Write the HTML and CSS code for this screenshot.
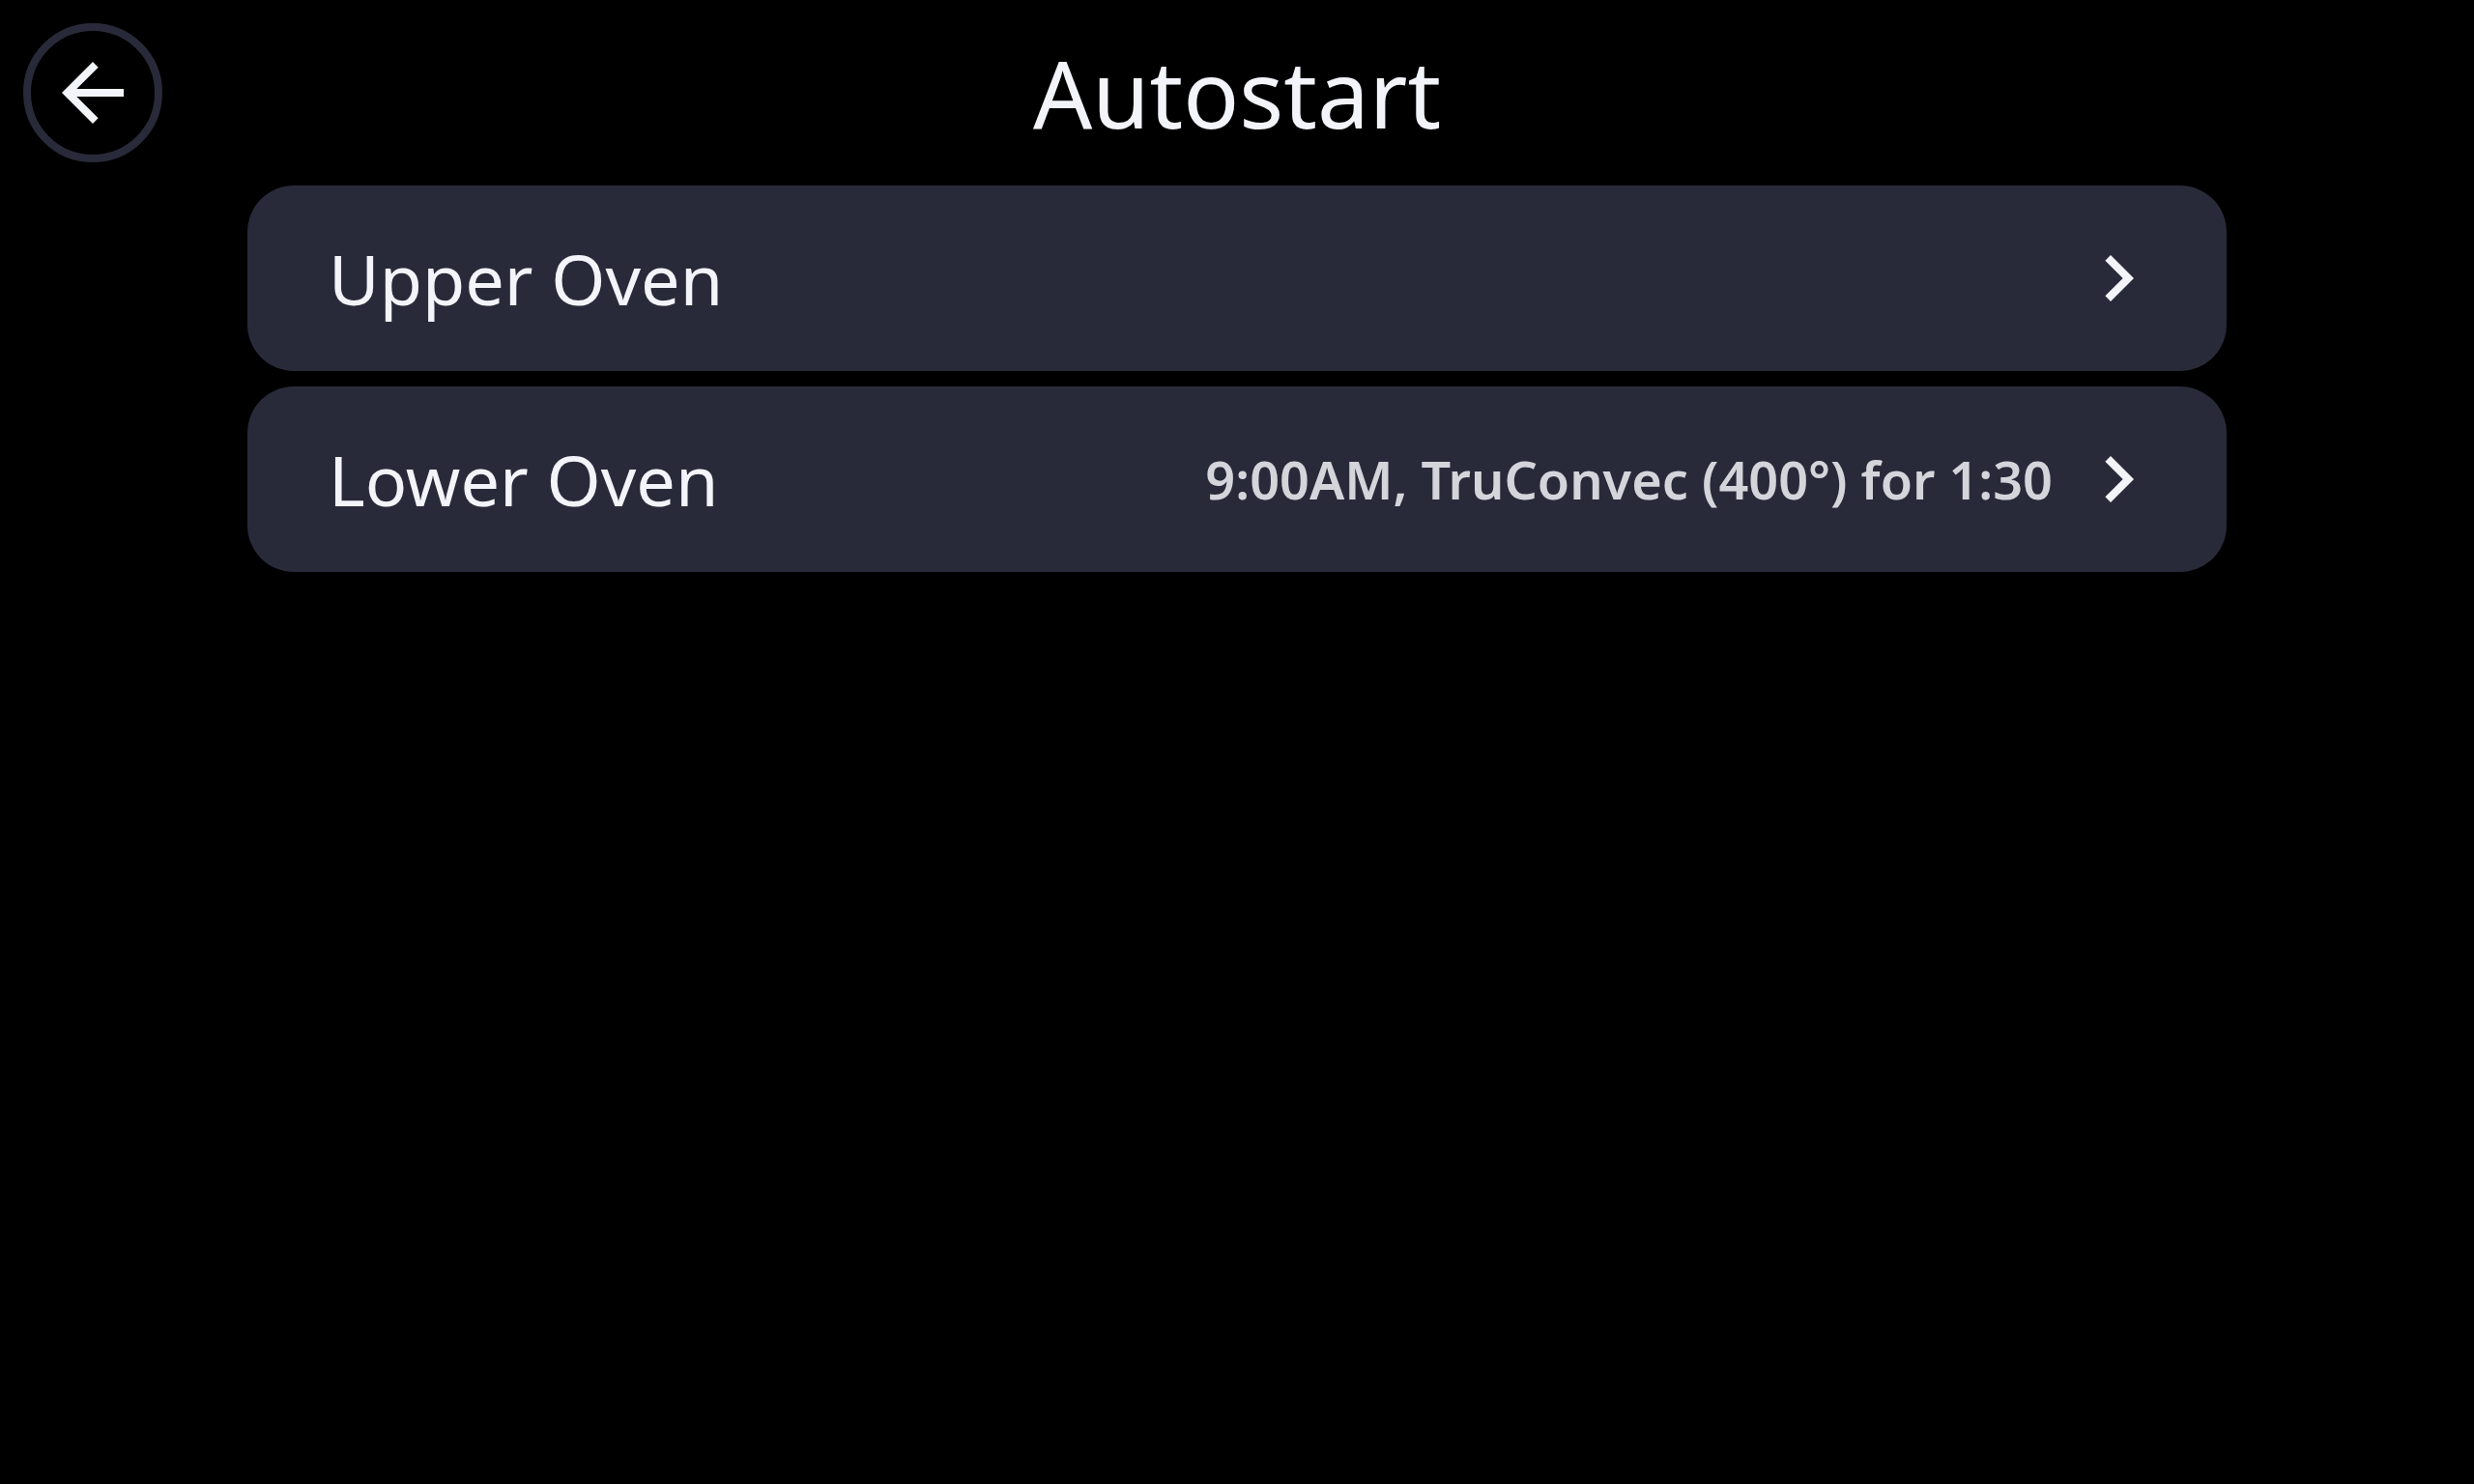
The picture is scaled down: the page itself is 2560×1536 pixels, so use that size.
FILE: index.html
```html
<!DOCTYPE html>
<html lang="en">
<head>
    <meta charset="UTF-8">
    <meta name="viewport" content="width=device-width, initial-scale=1.0">
    <title>Autostart</title>
    <link rel="stylesheet" href="styles.css">
</head>
<body>
    <header class="header">
        <button type="button" class="back-button" aria-label="Back">
            <svg class="icon" viewBox="0 0 24 24" aria-hidden="true">
                <path d="M20 11H7.83l5.59-5.59L12 4l-8 8 8 8 1.41-1.41L7.83 13H20v-2z"/>
            </svg>
        </button>
        <h1 class="title">Autostart</h1>
    </header>

    <main class="menu">
        <button type="button" class="menu-item">
            <span class="menu-label">Upper Oven</span>
            <svg class="icon" viewBox="0 0 24 24" aria-hidden="true">
                <path d="M10 6L8.59 7.41 13.17 12l-4.58 4.59L10 18l6-6z"/>
            </svg>
        </button>

        <button type="button" class="menu-item">
            <span class="menu-label">Lower Oven</span>
            <span class="menu-value">9:00AM, TruConvec (400°) for 1:30</span>
            <svg class="icon" viewBox="0 0 24 24" aria-hidden="true">
                <path d="M10 6L8.59 7.41 13.17 12l-4.58 4.59L10 18l6-6z"/>
            </svg>
        </button>
    </main>
</body>
</html>
```
FILE: styles.css
```css
* {
    margin: 0;
    padding: 0;
    box-sizing: border-box;
}

body {
    min-height: 100vh;
    background: #000;
    color: #f3f4fa;
    font-family: 'Noto Sans', 'Open Sans', sans-serif;
}

button {
    border: none;
    color: inherit;
    font-family: inherit;
    cursor: pointer;
}

.icon {
    flex: none;
    width: 96px;
    height: 96px;
    fill: currentColor;
}

.header {
    display: grid;
    grid-template-columns: 144px 1fr 144px;
    align-items: center;
    padding: 24px;
}

.back-button {
    display: flex;
    align-items: center;
    justify-content: center;
    width: 144px;
    height: 144px;
    border: 8px solid #292a39;
    border-radius: 50%;
    background: transparent;
}

.title {
    font-size: 96px;
    font-weight: 400;
    line-height: 128px;
    text-align: center;
}

.menu {
    display: flex;
    flex-direction: column;
    gap: 16px;
    padding: 0 10%;
}

.menu-item {
    display: flex;
    align-items: center;
    gap: 20px;
    padding: 48px 64px 48px 84px;
    border-radius: 48px;
    background: #292a39;
    text-align: left;
}

.menu-label {
    flex: 1;
    font-size: 72px;
    line-height: 96px;
}

.menu-value {
    color: #d4d5db;
    font-size: 54px;
    font-weight: 600;
    line-height: 72px;
}
```
